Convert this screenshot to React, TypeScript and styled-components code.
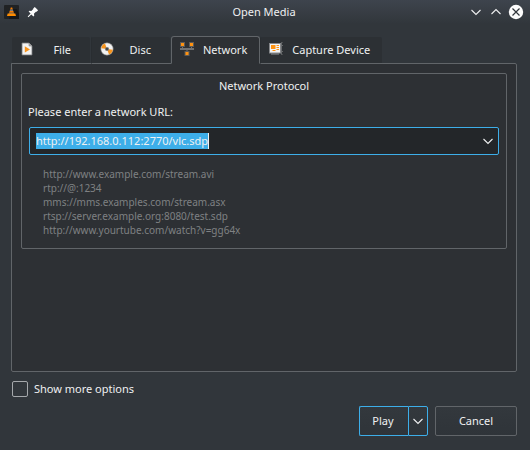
import React, { useEffect, useRef, useState } from "react";
import styled, { createGlobalStyle, css } from "styled-components";

const color = {
  window: "#31363b",
  panel: "#2d3034",
  tab: "#2c3034",
  field: "#232629",
  line: "#616569",
  text: "#eff0f1",
  muted: "#7f8183",
  accent: "#3daee9",
  orange: "#f7941d",
};

const GlobalStyle = createGlobalStyle`
  *, *::before, *::after { box-sizing: border-box; }
  body {
    margin: 0;
    background: ${color.window};
    color: ${color.text};
    font: 11px/16px "Noto Sans", "Open Sans", sans-serif;
  }
  button, input { font: inherit; color: inherit; }
  svg { display: block; flex: none; }
`;

const Window = styled.div`
  display: flex;
  flex-direction: column;
  min-height: 100vh;
`;

const TitleBar = styled.header`
  display: grid;
  grid-template-columns: 1fr auto 1fr;
  align-items: center;
  height: 24px;
  padding: 0 6px 0 4px;
  background: linear-gradient(#3e444d, ${color.window});
`;

const TitleGroup = styled.div<{ $end?: boolean }>`
  display: flex;
  align-items: center;
  gap: ${(p) => (p.$end ? 4 : 6)}px;
  justify-content: ${(p) => (p.$end ? "flex-end" : "flex-start")};
`;

const Title = styled.h1`
  margin: 0;
  font-size: 11px;
  font-weight: 400;
`;

const IconButton = styled.button`
  display: grid;
  place-items: center;
  width: 16px;
  height: 16px;
  padding: 0;
  border: 0;
  background: none;
`;

const Main = styled.main`
  display: flex;
  flex: 1;
  flex-direction: column;
  padding: 12px 13px 14px 11px;
`;

const TabList = styled.div`
  display: flex;
  z-index: 1;
  margin-bottom: -1px;
`;

const Tab = styled.button<{ $active: boolean }>`
  display: flex;
  align-items: center;
  justify-content: space-between;
  gap: 8px;
  min-width: 80px;
  height: 28px;
  padding: 0 19px 0 8px;
  border: 1px solid transparent;
  border-bottom-color: ${color.line};
  border-radius: 3px 3px 0 0;
  background: ${color.tab};
  background-clip: padding-box;
  svg { margin-bottom: 2px; }
  & + & { border-left-color: #292d31; }
  ${(p) =>
    p.$active &&
    css`
      &&& { border-color: ${color.line}; }
      &&& { border-bottom-color: ${color.panel}; }
      padding: 0 12px 0 7px;
      background: ${color.panel};
    `}
  &:last-child { padding: 0 12px 0 7px; }
`;

const Panel = styled.section`
  flex: 1;
  padding: 9px;
  border: 1px solid ${color.line};
  border-radius: 0 2px 2px 2px;
  background: ${color.panel};
`;

const Group = styled.fieldset`
  display: flow-root;
  min-width: 0;
  margin: 0;
  padding: 4px 7px 11px;
  border: 1px solid ${color.line};
  border-radius: 2px;
`;

const Legend = styled.legend`
  float: left;
  width: 100%;
  padding: 0;
  text-align: center;
`;

const FieldLabel = styled.label`
  display: block;
  clear: both;
  padding: 10px 0 7px;
  margin-left: -1px;
`;

const Combo = styled.div`
  display: flex;
  align-items: center;
  justify-content: space-between;
  height: 28px;
  padding: 0 2px 0 6px;
  border: 1px solid ${color.accent};
  border-radius: 2px;
  background: ${color.field};
`;

const UrlInput = styled.input`
  field-sizing: content;
  height: 16px;
  padding: 0;
  border: 0;
  border-right: 1px solid ${color.text};
  outline: 0;
  background: none;
  line-height: 16px;
  &::selection { background: ${color.accent}; color: ${color.text}; }
`;

const Examples = styled.ul`
  margin: 12px 0 0;
  padding: 0 0 0 14px;
  list-style: none;
  color: ${color.muted};
  font-size: 10px;
  line-height: 14px;
`;

const Option = styled.label`
  display: flex;
  align-items: center;
  align-self: flex-start;
  gap: 6px;
  margin: 9px 0 9px 1px;
`;

const CheckBox = styled.input`
  appearance: none;
  width: 16px;
  height: 16px;
  margin: 0;
  border: 1px solid #a5a8ab;
  border-radius: 2px;
  &:checked { background: ${color.accent}; box-shadow: inset 0 0 0 3px ${color.window}; }
`;

const Actions = styled.footer`
  display: flex;
  justify-content: flex-end;
  gap: 7px;
`;

const Split = styled.div`
  display: flex;
`;

const Button = styled.button<{ $kind?: "main" | "menu" }>`
  display: grid;
  place-items: center;
  width: ${(p) => (p.$kind === "main" ? 49 : p.$kind === "menu" ? 20 : 82)}px;
  height: 30px;
  padding: 0;
  border: 1px solid ${(p) => (p.$kind ? color.accent : color.line)};
  border-radius: ${(p) => (p.$kind === "main" ? "2px 0 0 2px" : p.$kind === "menu" ? "0 2px 2px 0" : "2px")};
  ${(p) => p.$kind === "main" && "border-right: 0; padding-right: 2px;"}
  background: linear-gradient(#33383d, #2f3439);
`;

const Chevron = ({ up = false }: { up?: boolean }) => (
  <svg width="12" height="8" viewBox="0 0 12 8" fill="none" stroke="#eff0f1" strokeWidth="1.1">
    <path d={up ? "M1.5 6 6 1.5 10.5 6" : "M1.5 2 6 6.5 10.5 2"} />
  </svg>
);

const VlcIcon = () => (
  <svg width="15" height="14" viewBox="0 0 15 14">
    <rect width="15" height="14" rx="1" fill="#202224" />
    <path d="M8 4h5l2 5v5H5z" fill="#151719" />
    <path d="M6.8 2.5h1.4l.6 2H6.2z" fill="#f57c00" />
    <path d="M6.1 4.5h2.8l.4 1.4H5.7z" fill="#777" />
    <path d="M5.6 6h3.8l.5 1.7H5.1z" fill="#f57c00" />
    <path d="M5 7.7h5l.3 1H4.7z" fill="#8a8178" />
    <path d="M3.7 8.6h7.6l.7 2.4H3z" fill="#ff8c00" />
  </svg>
);

const PinIcon = () => (
  <svg width="12" height="12" viewBox="0 0 12 12">
    <path d="M6.2 2.4 7.8.9l3.3 3.3-1.5 1.6-.7-.1-2 2 .4 1.8-.9.9-2.1-2L1.4 11.2l-.7-.7 2.9-2.9-2-2 .9-.9 1.8.4 2-2z" fill="#fcfcfc" />
  </svg>
);

const CloseIcon = () => (
  <svg width="16" height="16" viewBox="0 0 16 16">
    <circle cx="8" cy="8" r="7.2" fill="#fcfcfc" />
    <path d="m4.5 4.5 7 7m0-7-7 7" stroke="#31363b" strokeWidth="1.2" />
  </svg>
);

const FileIcon = () => (
  <svg width="14" height="16" viewBox="0 0 14 16">
    <path d="M2 2h7l3 3v9H2z" fill="#f2f2f2" stroke="#77797b" strokeWidth=".8" />
    <path d="M9 2v3h3" fill="#aaa" stroke="#888" strokeWidth=".6" />
    <path d="M4.8 5.2v6.4L10 8.4z" fill={color.orange} />
  </svg>
);

const DiscIcon = () => (
  <svg width="14" height="16" viewBox="0 0 14 16">
    <circle cx="7" cy="8" r="6.2" fill="#f2f2f2" stroke="#777" strokeWidth=".6" />
    <path d="M7 8 1.3 7.3A6 6 0 0 1 5 2.6zM7 8l5.8.7A6 6 0 0 1 9 13.4z" fill={color.orange} />
    <circle cx="7" cy="8" r="2.1" fill="#777" />
    <circle cx="7" cy="8" r=".9" fill="#333" />
  </svg>
);

const NetworkIcon = () => (
  <svg width="16" height="16" viewBox="0 0 16 16">
    <path d="M1 7h14v2H1zM3 6h1v1H3zM12 6h1v1h-1zM7.5 9h1v1h-1z" fill="#707274" />
    <g fill="#ff9210" stroke="#5d5b58">
      <rect x="1.5" y="1.5" width="4" height="4" />
      <rect x="10.5" y="1.5" width="4" height="4" />
      <rect x="6" y="10.5" width="4" height="4" />
    </g>
  </svg>
);

const CaptureIcon = () => (
  <svg width="16" height="16" viewBox="0 0 16 16">
    <path d="M14.5 1.5h-1v12h1M13 4.5h2M13 10.5h2" fill="none" stroke="#66696b" />
    <path d="M3 12h8v2H3z" fill="#5d6062" />
    <rect x="1.5" y="2.5" width="11" height="9.5" fill="#f2f2f2" stroke="#85878a" />
    <path d="M3 4h4.5v4H3zM8.5 4H11v1H8.5zM8.5 6H11v1H8.5zM4.5 9h3v1h-3zM8.5 8H11v1H8.5z" fill="#ff9210" />
  </svg>
);

const tabs = [
  { name: "File", Icon: FileIcon },
  { name: "Disc", Icon: DiscIcon },
  { name: "Network", Icon: NetworkIcon },
  { name: "Capture Device", Icon: CaptureIcon },
];

const examples = [
  "http://www.example.com/stream.avi",
  "rtp://@:1234",
  "mms://mms.examples.com/stream.asx",
  "rtsp://server.example.org:8080/test.sdp",
  "http://www.yourtube.com/watch?v=gg64x",
];

export default function App() {
  const [active, setActive] = useState("Network");
  const [url, setUrl] = useState("http://192.168.0.112:2770/vlc.sdp");
  const input = useRef<HTMLInputElement>(null);

  useEffect(() => {
    input.current?.focus();
    input.current?.select();
  }, []);

  return (
    <Window>
      <GlobalStyle />
      <TitleBar>
        <TitleGroup>
          <VlcIcon />
          <IconButton aria-label="Keep above others"><PinIcon /></IconButton>
        </TitleGroup>
        <Title>Open Media</Title>
        <TitleGroup $end>
          <IconButton aria-label="Minimize"><Chevron /></IconButton>
          <IconButton aria-label="Maximize"><Chevron up /></IconButton>
          <IconButton aria-label="Close"><CloseIcon /></IconButton>
        </TitleGroup>
      </TitleBar>
      <Main>
        <TabList role="tablist">
          {tabs.map(({ name, Icon }) => (
            <Tab key={name} role="tab" aria-selected={active === name} $active={active === name} onClick={() => setActive(name)}>
              <Icon />
              {name}
            </Tab>
          ))}
        </TabList>
        <Panel role="tabpanel" aria-label={active}>
          <Group>
            <Legend>Network Protocol</Legend>
            <FieldLabel htmlFor="url">Please enter a network URL:</FieldLabel>
            <Combo>
              <UrlInput id="url" ref={input} value={url} spellCheck={false} onChange={(e) => setUrl(e.target.value)} />
              <IconButton aria-label="Recent URLs"><Chevron /></IconButton>
            </Combo>
            <Examples>
              {examples.map((line) => <li key={line}>{line}</li>)}
            </Examples>
          </Group>
        </Panel>
        <Option>
          <CheckBox type="checkbox" />
          Show more options
        </Option>
        <Actions>
          <Split>
            <Button $kind="main">Play</Button>
            <Button $kind="menu" aria-label="Play options"><Chevron /></Button>
          </Split>
          <Button>Cancel</Button>
        </Actions>
      </Main>
    </Window>
  );
}
